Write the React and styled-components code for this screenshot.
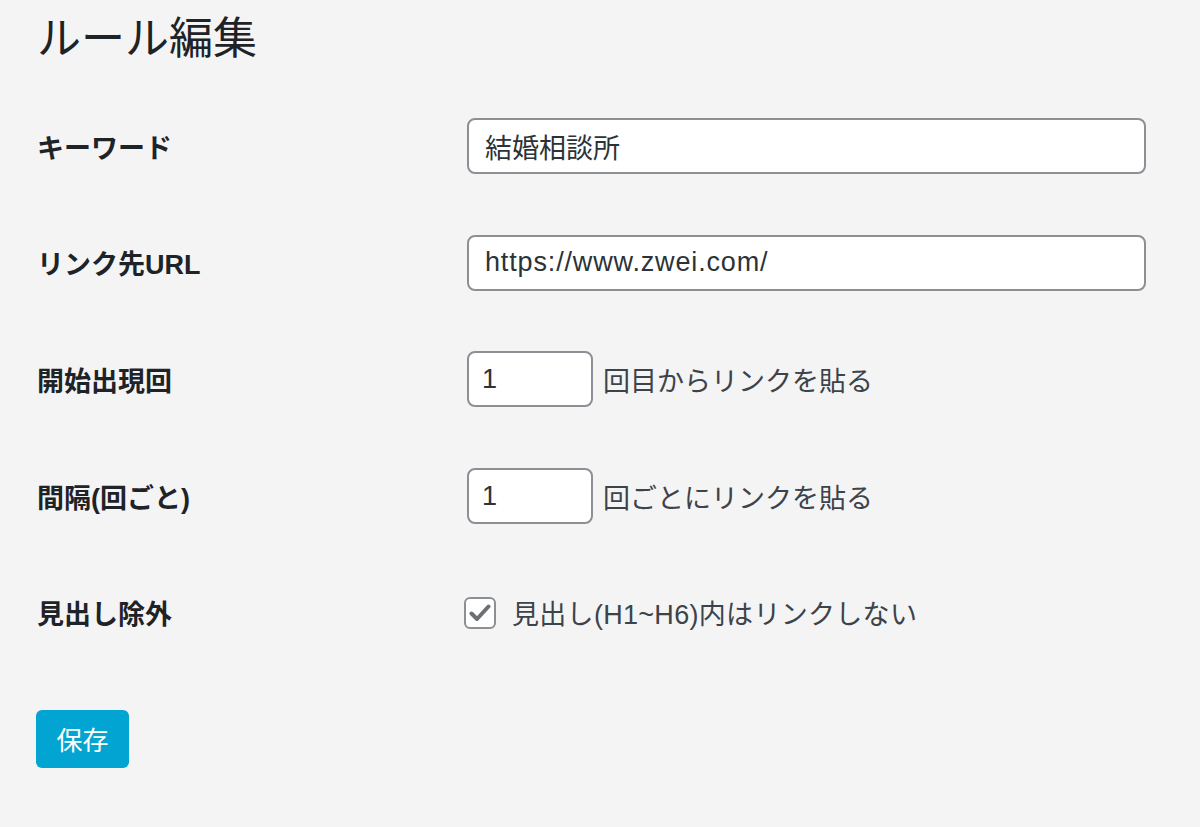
import React from "react";
import styled, { createGlobalStyle } from "styled-components";

const GlobalStyle = createGlobalStyle`
  html, body {
    margin: 0;
    padding: 0;
    background: #f4f4f4;
  }
  body {
    font-family: "Liberation Sans", "Noto Sans CJK JP", sans-serif;
    color: #1d2327;
  }
`;

function App() {
  return (
    <>
      <GlobalStyle />
      <Page>
        <Title>ルール編集</Title>
        <Form onSubmit={(e) => e.preventDefault()}>
          <Rows>
            <Label>キーワード</Label>
            <Field>
              <TextInput type="text" defaultValue="結婚相談所" />
            </Field>

            <Label>リンク先URL</Label>
            <Field>
              <TextInput type="text" defaultValue="https://www.zwei.com/" $wide />
            </Field>

            <Label>開始出現回</Label>
            <Field>
              <NumberInput type="text" defaultValue="1" />
              <Suffix>回目からリンクを貼る</Suffix>
            </Field>

            <Label>間隔(回ごと)</Label>
            <Field>
              <NumberInput type="text" defaultValue="1" />
              <Suffix>回ごとにリンクを貼る</Suffix>
            </Field>

            <Label>見出し除外</Label>
            <Field>
              <CheckLabel>
                <CheckBox>
                  <svg width="22" height="18" viewBox="0 0 22 18">
                    <path
                      d="M2.5 9.5 L8 15 L19.5 2.5"
                      fill="none"
                      stroke="#6c7075"
                      strokeWidth="4"
                      strokeLinecap="round"
                      strokeLinejoin="round"
                    />
                  </svg>
                </CheckBox>
                <Suffix $spaced>見出し(H1~H6)内はリンクしない</Suffix>
              </CheckLabel>
            </Field>
          </Rows>
          <SaveButton type="submit">保存</SaveButton>
        </Form>
      </Page>
    </>
  );
}

const Page = styled.div`
  padding: 9px 54px 40px 37px;
`;

const Title = styled.h1`
  margin: 0 0 49px 0;
  font-size: 44px;
  line-height: 60px;
  font-weight: 400;
  color: #1d2327;
`;

const Form = styled.form`
  display: flex;
  flex-direction: column;
  align-items: flex-start;
`;

const Rows = styled.div`
  width: 100%;
  display: grid;
  grid-template-columns: 430px 1fr;
  grid-auto-rows: 56px;
  row-gap: 60.7px;
`;

const Label = styled.div`
  display: flex;
  align-items: center;
  font-size: 27px;
  font-weight: 700;
  color: #1d2327;
`;

const Field = styled.div`
  display: flex;
  align-items: center;
  gap: 10px;
`;

const TextInput = styled.input`
  box-sizing: border-box;
  width: 100%;
  height: 56px;
  padding: 0 16px;
  border: 2px solid #8c8f94;
  border-radius: 8px;
  background: #fff;
  font-family: "Liberation Sans", "Noto Sans CJK JP", sans-serif;
  font-size: 27px;
  letter-spacing: ${(p) => (p.$wide ? "0.85px" : "0")};
  color: #2c3338;
  outline: none;
`;

const NumberInput = styled(TextInput)`
  width: 126px;
  padding: 0 13px;
`;

const Suffix = styled.span`
  font-size: 27px;
  letter-spacing: ${(p) => (p.$spaced ? "0.3px" : "0")};
  color: #3c434a;
  white-space: nowrap;
`;

const CheckLabel = styled.label`
  display: flex;
  align-items: center;
  gap: 16px;
  margin-left: -3px;
`;

const CheckBox = styled.span`
  box-sizing: border-box;
  width: 32px;
  height: 32px;
  border: 2px solid #8c8f94;
  border-radius: 6px;
  background: #fff;
  display: flex;
  align-items: center;
  justify-content: center;
`;

const SaveButton = styled.button`
  margin-top: 69px;
  margin-left: -1px;
  width: 93px;
  height: 58px;
  border: none;
  border-radius: 6px;
  background: #02a5d1;
  color: #fff;
  font-family: "Liberation Sans", "Noto Sans CJK JP", sans-serif;
  font-size: 26px;
  cursor: pointer;
`;

export default App;
